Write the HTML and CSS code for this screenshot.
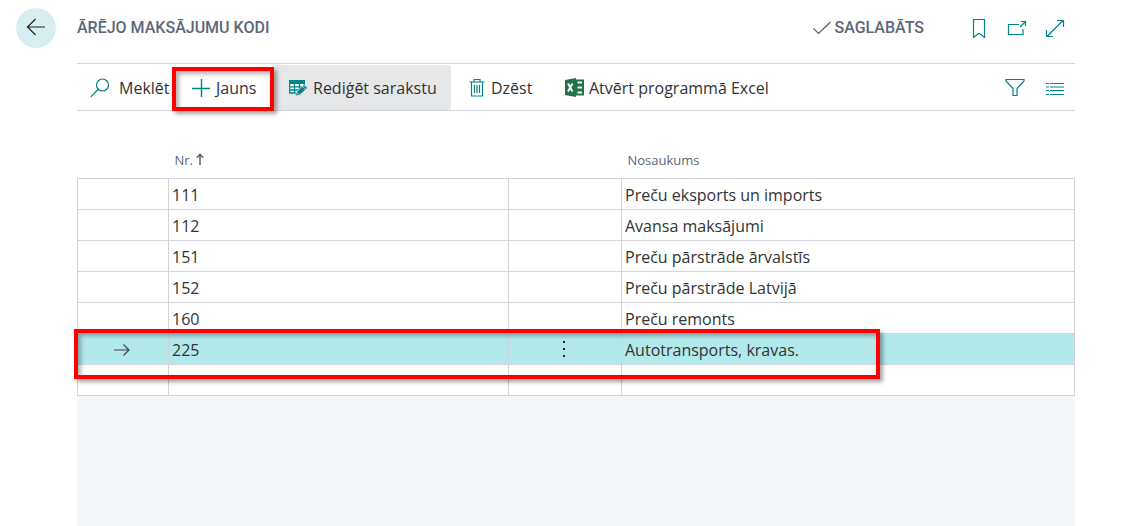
FILE: index.html
```html
<!DOCTYPE html>
<html lang="lv">
<head>
<meta charset="utf-8">
<meta name="viewport" content="width=device-width, initial-scale=1">
<title>Ārējo maksājumu kodi</title>
<link rel="stylesheet" href="styles.css">
</head>
<body>
<div class="page">
  <header class="header">
    <button class="back" type="button" aria-label="Atpakaļ">
      <svg width="20" height="20" viewBox="0 0 20 20"><path d="M19 9H1.500M9.500 1 1.500 9l8 8" stroke="#222" stroke-width="1.200"/></svg>
    </button>
    <h1 class="title">ĀRĒJO MAKSĀJUMU KODI</h1>
    <div class="status">
      <svg width="18" height="16" viewBox="0 0 18 16"><path d="M.5 8.500 5.500 13.500 17.500 2" stroke="#505c6d" stroke-width="1.100"/></svg>
      <span>SAGLABĀTS</span>
    </div>
    <div class="page-actions">
      <button class="icon-button" type="button" aria-label="Grāmatzīme"><svg width="20" height="20" viewBox="0 0 20 20"><path d="M4.500 1.500h11v18L12.500 17 10 15.500 7.500 17l-3 2.500z"/></svg></button>
      <button class="icon-button" type="button" aria-label="Atvērt jaunā logā"><svg width="20" height="20" viewBox="0 0 20 20"><path d="M12 6.500H1.500v10h14.500V11M13 9l5-5M14 3.500h4.500V8"/></svg></button>
      <button class="icon-button" type="button" aria-label="Izvērst"><svg width="20" height="20" viewBox="0 0 20 20"><path d="M2 18.500 18 2.500M12 2.500h6.500V9M1.500 12v6.500H8"/></svg></button>
    </div>
  </header>

  <main class="content">
    <div class="toolbar" role="toolbar" aria-label="Darbības">
      <button class="action search" type="button">
        <svg width="20" height="20" viewBox="0 0 20 20"><circle cx="12.500" cy="7" r="6"/><path d="M8 11.500.8 18.800"/></svg>
        <span>Meklēt</span>
      </button>
      <button class="action new" type="button">
        <svg width="18" height="18" viewBox="0 0 18 18"><path d="M9.500 0v18M0 9.500h18" stroke-width="1.400"/></svg>
        <span>Jauns</span>
        <span class="callout callout-button"></span>
      </button>
      <button class="action edit" type="button" aria-pressed="true">
        <svg width="19" height="18" viewBox="0 0 19 18"><path d="M.7 1h14.600v13H.7z" fill="#fff" stroke="none"/><path d="M0 1h16v4H0z" fill="#00838a" stroke="none"/><path d="M.7 2v12H10M.7 7.800h14M.7 11h11M5.500 4v10M10.500 4v9M15.300 3v3" stroke-width="1.300"/><path d="m6.500 17 1-4 7.500-7.500 3.500 3.500-8 7.200z" fill="#00838a" stroke="#e6e7e9" stroke-width=".8"/><path d="m13.300 7 3.200 3.300M8 13.500l2 2" stroke="#e6e7e9" stroke-width=".9"/></svg>
        <span>Rediģēt sarakstu</span>
      </button>
      <button class="action delete" type="button">
        <svg width="16" height="19" viewBox="0 0 16 19"><path d="M.5 4h15M5 4V1.500h6V4M2.500 4v14h11V4M5.500 7v8M8 7v8M10.500 7v8"/></svg>
        <span>Dzēst</span>
      </button>
      <button class="action excel" type="button">
        <svg width="19" height="19" viewBox="0 0 19 19"><path d="M10 1.500h9v16h-9z" fill="#217346" stroke="none"/><path d="M12.500 4.500H17M12.500 9.500H17M12.500 14.500H17" stroke="#fff" stroke-width="2"/><path d="M0 2 11 0v19L0 17z" fill="#217346" stroke="none"/><path d="m3 5.500 4.500 8M7.500 5.500 3 13.500" stroke="#fff" stroke-width="1.900"/></svg>
        <span>Atvērt programmā Excel</span>
      </button>
      <div class="view-actions">
        <button class="icon-button" type="button" aria-label="Filtrēt"><svg width="20" height="20" viewBox="0 0 20 20"><path d="M1 1.500h18v1.500l-7 7.500v7H8v-7L1 3z"/></svg></button>
        <button class="icon-button" type="button" aria-label="Saraksts"><svg width="18" height="14" viewBox="0 0 18 14"><path d="M0 2.500h3M4 2.500h14M0 6h3M4 6h14M0 9.500h3M4 9.500h14M0 13.500h3M4 13.500h14"/></svg></button>
      </div>
    </div>

    <div class="table-area">
      <table class="codes">
        <colgroup><col class="col-mark"><col class="col-code"><col class="col-menu"><col></colgroup>
        <thead>
          <tr>
            <td></td>
            <th scope="col">Nr. <svg class="sort" width="8" height="12" viewBox="0 0 8 12"><path d="M4 12V1.500M.7 4.800 4 1.500l3.300 3.300" stroke="#666" stroke-width="1.600"/></svg></th>
            <td></td>
            <th scope="col">Nosaukums</th>
          </tr>
        </thead>
        <tbody>
          <tr><td></td><td>111</td><td></td><td>Preču eksports un imports</td></tr>
          <tr><td></td><td>112</td><td></td><td>Avansa maksājumi</td></tr>
          <tr><td></td><td>151</td><td></td><td>Preču pārstrāde ārvalstīs</td></tr>
          <tr><td></td><td>152</td><td></td><td>Preču pārstrāde Latvijā</td></tr>
          <tr><td></td><td>160</td><td></td><td>Preču remonts</td></tr>
          <tr class="selected">
            <td class="center"><svg width="16" height="12" viewBox="0 0 16 12"><path d="M0 6h15M9.500.5 15 6l-5.500 5.500" stroke="#444" stroke-width="1.200"/></svg></td>
            <td>225</td>
            <td class="center"><button class="row-menu" type="button" aria-label="Rādīt vairāk"><svg width="4" height="17" viewBox="0 0 4 17"><path d="M1 0h2v2H1zM1 7h2v2H1zM1 14h2v2H1z" fill="#222" stroke="none"/></svg></button></td>
            <td>Autotransports, kravas.</td>
          </tr>
          <tr><td></td><td></td><td></td><td></td></tr>
        </tbody>
      </table>
      <div class="callout callout-row"></div>
    </div>
  </main>
</div>
</body>
</html>
```
FILE: styles.css
```css
* {
  box-sizing: border-box;
}

body {
  margin: 0;
  background: #fff;
  color: #333;
  font: 16px/24px "Open Sans", "Noto Sans", sans-serif;
}

button {
  margin: 0;
  padding: 0;
  border: 0;
  background: none;
  color: inherit;
  font: inherit;
  cursor: pointer;
}

svg {
  flex: none;
  fill: none;
  stroke: #00838a;
  stroke-width: 1.2;
}

.page {
  display: flex;
  flex-direction: column;
  min-height: 100vh;
}

.header {
  display: flex;
  align-items: center;
  height: 63px;
  padding: 0 73px 8px 16px;
  color: #5c6778;
  font-family: Roboto, sans-serif;
  font-weight: 500;
}

.back {
  display: flex;
  align-items: center;
  justify-content: center;
  width: 40px;
  height: 40px;
  border-radius: 50%;
  background: #d8eff1;
}

.title {
  margin: 0 auto 0 21px;
  font-size: 16px;
  font-weight: 500;
}

.status {
  display: flex;
  align-items: center;
  gap: 3px;
  margin-right: 45px;
}

.page-actions {
  display: flex;
  gap: 18px;
}

.icon-button {
  display: flex;
  align-items: center;
  justify-content: center;
  width: 20px;
  height: 20px;
}

.content {
  display: flex;
  flex: 1;
  flex-direction: column;
  margin: 0 63px 0 77px;
}

.toolbar {
  display: flex;
  height: 48px;
  padding-top: 1px;
  border-top: 1px solid #d2d4da;
  border-bottom: 1px solid #d2d4da;
}

.action {
  position: relative;
  display: flex;
  align-items: center;
  white-space: nowrap;
}

.search {
  gap: 9px;
  width: 95px;
  padding-left: 13px;
}

.new {
  gap: 6px;
  width: 102px;
  padding-left: 20px;
}

.edit {
  gap: 5px;
  width: 177px;
  padding-left: 15px;
  border-radius: 3px;
  background: #e6e7e9;
}

.delete {
  gap: 6px;
  width: 98px;
  padding-left: 18px;
}

.excel {
  gap: 5px;
  padding-left: 16px;
}

.view-actions {
  display: flex;
  align-items: center;
  gap: 20px;
  margin-left: auto;
  padding-right: 10px;
}

.table-area {
  position: relative;
  flex: 1;
  background: #f5f6f8;
}

.codes {
  width: 100%;
  border-collapse: collapse;
  table-layout: fixed;
  background: #fff;
}

.col-mark {
  width: 91px;
}

.col-code {
  width: 340px;
}

.col-menu {
  width: 113px;
}

.codes thead {
  height: 67px;
}

.codes th {
  padding: 32px 6px 0;
  color: #5c6778;
  font-size: 13px;
  font-weight: 400;
  text-align: left;
}

.codes tbody td {
  height: 31px;
  padding: 2px 3px 0;
  border: 1px solid #d2d4da;
  line-height: 24px;
}

.codes tbody .center {
  padding: 2px 2px 0 0;
  text-align: center;
}

.center svg {
  display: block;
  margin: 0 auto;
}

.selected {
  background: #b2e9eb;
}

.row-menu {
  display: block;
  width: 24px;
  margin: 0 auto;
}

.callout {
  position: absolute;
  border: 4px solid #f00;
  box-shadow: 3px 3px 4px rgba(0, 0, 0, 0.35), inset 3px 3px 4px rgba(0, 0, 0, 0.3);
  pointer-events: none;
}

.callout-button {
  z-index: 1;
  inset: 2px 0 -1px;
}

.callout-row {
  top: 218px;
  right: 195px;
  left: -3px;
  height: 50px;
}
```
